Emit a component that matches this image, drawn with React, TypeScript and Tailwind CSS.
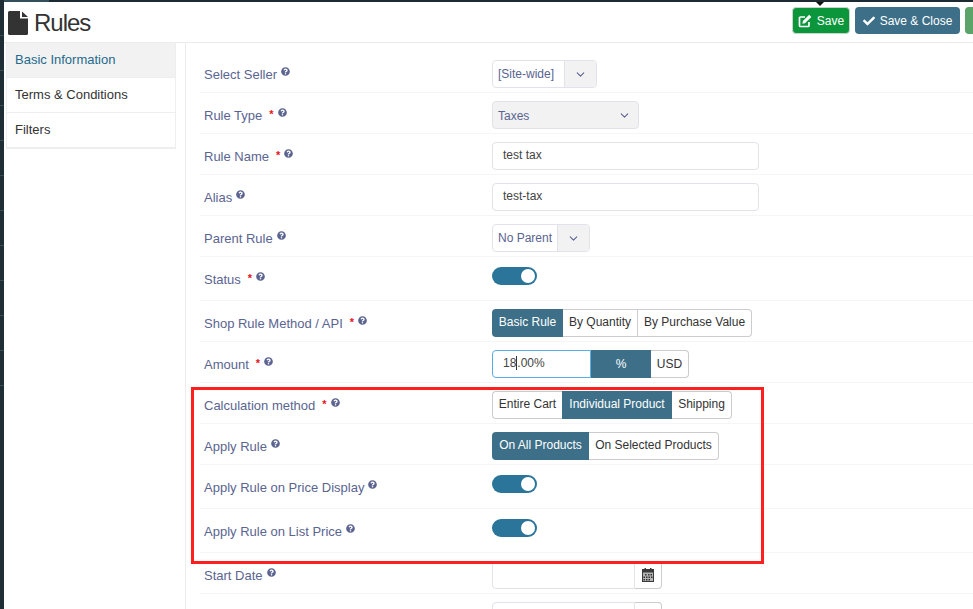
import React from 'react';
import { FaQuestionCircle, FaCheck } from 'react-icons/fa';
import { LuChevronDown } from 'react-icons/lu';

const font = 'font-["Liberation_Sans",Arial,sans-serif]';

function FileIcon() {
  return (
    <svg viewBox="0 0 20 24" className="w-5 h-6 fill-[#333]">
      <path d="M1.5 0H12v7.5h8V22.5a1.5 1.5 0 0 1-1.5 1.5h-17A1.5 1.5 0 0 1 0 22.5v-21A1.500 1.500 0 0 1 1.500 0z" />
      <path d="M14 0.500 20 6h-6z" />
    </svg>
  );
}

function SaveIcon() {
  return (
    <svg viewBox="0 0 14 14" className="w-[14px] h-[14px]">
      <path d="M7 3H2.500a1 1 0 0 0-1 1v7.500a1 1 0 0 0 1 1H10a1 1 0 0 0 1-1V8" fill="none" stroke="white" strokeWidth="1.700" />
      <path d="M11.200 0.800 13.300 2.900 7 9.200 4.400 9.700 4.900 7.100z" fill="white" />
    </svg>
  );
}

function CalendarIcon() {
  return (
    <svg viewBox="0 0 12 14" className="w-3 h-[14px]">
      <rect x="0" y="1" width="12" height="13" fill="#3a3a3a" />
      <rect x="2.500" y="0" width="1.500" height="2" fill="#3a3a3a" />
      <rect x="8" y="0" width="1.500" height="2" fill="#3a3a3a" />
      <rect x="1" y="4.500" width="10" height="8.500" fill="#b5b5b5" />
      <path d="M3 6h1.500v1.500H3zM6 6h1.500v1.500H6zM8.500 6H10v1.500H8.500zM1.500 8.500H3V10H1.500zM4 8.500h1.500V10H4zM6.500 8.500H8V10H6.500zM9 8.500h1.500V10H9zM1.500 11H3v1.500H1.500zM4 11h1.500v1.500H4zM6.500 11H8v1.500H6.500z" fill="#333" />
    </svg>
  );
}

function Help() {
  return <FaQuestionCircle className="text-[#5b6390] w-[9px] h-[9px] mb-[7px] ml-1 shrink-0" />;
}

function Label({ text, required, h = 'h-[41px]', children }: { text: string; required?: boolean; h?: string; children: React.ReactNode }) {
  return (
    <div className={`flex ${h} border-b border-[#f5f5f5]`}>
      <div className="w-[292px] pl-1 pt-[15px] shrink-0">
        <div className="flex items-center text-[13px] leading-4 text-[#5a6491]">
          <span>{text}</span>
          {required && <span className="text-[#e8101c] ml-[7px] mb-[4px] text-[11px] leading-3 font-bold">*</span>}
          <Help />
        </div>
      </div>
      <div className="flex-1">{children}</div>
    </div>
  );
}

function Select({ text, w, split, filled }: { text: string; w: string; split?: string; filled?: boolean }) {
  return (
    <div className={`mt-2 flex h-7 ${w} border border-[#e2e2ea] rounded text-[12px] text-[#5a6491] overflow-hidden ${filled ? 'bg-[#f2f2f2]' : 'bg-white'}`}>
      <div className={`flex-1 flex items-center pl-[5px] ${filled ? 'pt-px' : ''}`}>{text}</div>
      <div className={`${split ?? 'w-7'} flex items-center justify-center ${split ? 'bg-[#f2f2f2] border-l border-[#e2e2ea]' : ''}`}>
        <LuChevronDown className="w-[13px] h-[13px] text-[#5a6491]" />
      </div>
    </div>
  );
}

function TextInput({ value }: { value: string }) {
  return (
    <div className="mt-2 h-7 w-[267px] border border-[#e2e2ea] rounded flex items-center pl-[10px] pb-[2px] text-[12px] text-[#444]">
      {value}
    </div>
  );
}

function Toggle() {
  return (
    <div className="mt-[10px] w-[45px] h-[18px] rounded-full bg-[#2a7599] flex items-center justify-end pr-[2px]">
      <div className="w-[14px] h-[14px] rounded-full bg-white" />
    </div>
  );
}

type Segment = { label: string; w: string; active?: boolean };

function Segments({ items }: { items: Segment[] }) {
  return (
    <div className="mt-2 inline-flex h-7 text-[12px] text-[#333]">
      {items.map((it, i) => {
        const first = i === 0;
        const last = i === items.length - 1;
        return (
          <div
            key={it.label}
            className={`${it.w} flex items-center justify-center pb-[2px] ${first ? 'rounded-l' : ''} ${last ? 'rounded-r' : ''} ${
              it.active
                ? 'bg-[#3d6f88] text-white'
                : `border-y border-[#ccc] ${first ? 'border-l' : ''} ${last || !items[i + 1].active ? 'border-r' : ''}`
            }`}
          >
            {it.label}
          </div>
        );
      })}
    </div>
  );
}

function DateInput() {
  return (
    <div className="mt-2 flex h-7 w-[170px]">
      <div className="w-[143px] border border-[#e2e2ea] rounded-l" />
      <div className="w-[27px] border border-l-0 border-[#ccc] rounded-r flex items-center justify-center">
        <CalendarIcon />
      </div>
    </div>
  );
}

export default function App() {
  return (
    <div className={`${font} relative flex h-[609px] w-[973px] overflow-hidden bg-white`}>
      <div className="w-1 shrink-0 bg-[#1f2d35] flex flex-col">
        {Array.from({ length: 11 }).map((_, i) => (
          <div key={i} className={`${i === 0 ? 'h-9' : 'h-[35px]'} border-b border-[#3a4a55]`} />
        ))}
      </div>

      <div className="flex-1 flex flex-col min-w-0">
        <div className="h-[2px] shrink-0 flex">
          <div className="w-[45px] bg-[#33505c]" />
          <div className="flex-1 bg-[#1c2a33]" />
        </div>

        <header className="h-[41px] shrink-0 flex items-center justify-between border-b border-[#ececec]">
          <div className="flex items-center pl-1 text-[#333] pt-[2px]">
            <FileIcon />
            <h1 className="ml-[6px] text-[24px] leading-none tracking-[-1px]">Rules</h1>
          </div>
          <div className="flex items-center gap-[5px] text-[12px] text-white -mr-[13px] pb-[3px]">
            <button className="w-[58px] h-[27px] bg-[#0b963c] border border-[#c9d6cd] rounded flex items-center justify-center gap-[5px]">
              <SaveIcon />
              Save
            </button>
            <button className="w-[105px] h-[27px] bg-[#3d6f88] rounded flex items-center justify-center gap-[5px]">
              <FaCheck className="w-3 h-3" />
              Save &amp; Close
            </button>
            <button className="w-[21px] h-[27px] bg-[#5aa469] rounded" />
          </div>
        </header>

        <div className="flex flex-1 min-h-0">
          <nav className="ml-[2px] w-[170px] shrink-0 self-start border-x border-b border-[#eeeeee] text-[13px] text-[#333]">
            <div className="h-[35px] flex items-center pl-2 bg-[#f2f2f2] text-[#1f6a8c] border-b border-[#eeeeee]">Basic Information</div>
            <div className="h-[35px] flex items-center pl-2 border-b border-[#eeeeee]">Terms &amp; Conditions</div>
            <div className="h-[35px] flex items-center pl-2 border-b border-[#eeeeee]">Filters</div>
          </nav>

          <main className="ml-[9px] flex-1 border-l border-[#ececec] pl-[14px] pt-[9px]">
            <Label text="Select Seller"><Select text="[Site-wide]" w="w-[105px]" split="w-[32px]" /></Label>
            <Label text="Rule Type" required><Select text="Taxes" w="w-[147px]" filled /></Label>
            <Label text="Rule Name" required><TextInput value="test tax" /></Label>
            <Label text="Alias"><TextInput value="test-tax" /></Label>
            <Label text="Parent Rule"><Select text="No Parent" w="w-[98px]" split="w-[32px]" /></Label>
            <Label text="Status" required h="h-[44px]"><Toggle /></Label>
            <Label text="Shop Rule Method / API" required>
              <Segments items={[
                { label: 'Basic Rule', w: 'w-[71px]', active: true },
                { label: 'By Quantity', w: 'w-[75px]' },
                { label: 'By Purchase Value', w: 'w-[114px]' },
              ]} />
            </Label>
            <Label text="Amount" required>
              <div className="mt-2 flex h-7 text-[12px]">
                <div className="w-[99px] border border-[#5aaee8] rounded-l flex items-center pl-[10px] pb-[2px] text-[#444]">
                  18<span className="w-px h-[14px] bg-[#333]" />.00%
                </div>
                <div className="w-[60px] bg-[#3d6f88] text-white flex items-center justify-center">%</div>
                <div className="w-[38px] border border-l-0 border-[#ccc] rounded-r flex items-center justify-center text-[#333]">USD</div>
              </div>
            </Label>
            <Label text="Calculation method" required>
              <Segments items={[
                { label: 'Entire Cart', w: 'w-[70px]' },
                { label: 'Individual Product', w: 'w-[110px]', active: true },
                { label: 'Shipping', w: 'w-[60px]' },
              ]} />
            </Label>
            <Label text="Apply Rule">
              <Segments items={[
                { label: 'On All Products', w: 'w-[97px]', active: true },
                { label: 'On Selected Products', w: 'w-[130px]' },
              ]} />
            </Label>
            <Label text="Apply Rule on Price Display" h="h-[44px]"><Toggle /></Label>
            <Label text="Apply Rule on List Price" h="h-[44px]"><Toggle /></Label>
            <Label text="Start Date"><DateInput /></Label>
            <Label text="End Date"><DateInput /></Label>
          </main>
        </div>
      </div>

      {/* tooltip arrow over the save button */}
      <div className="absolute left-[816px] top-[2px] w-0 h-0 border-x-[4px] border-x-transparent border-t-[4px] border-t-[#111]" />
      {/* red annotation box */}
      <div className="absolute left-[191px] top-[387px] w-[573px] h-[177px] border-[3px] border-[#ff1f1f]" />
    </div>
  );
}
